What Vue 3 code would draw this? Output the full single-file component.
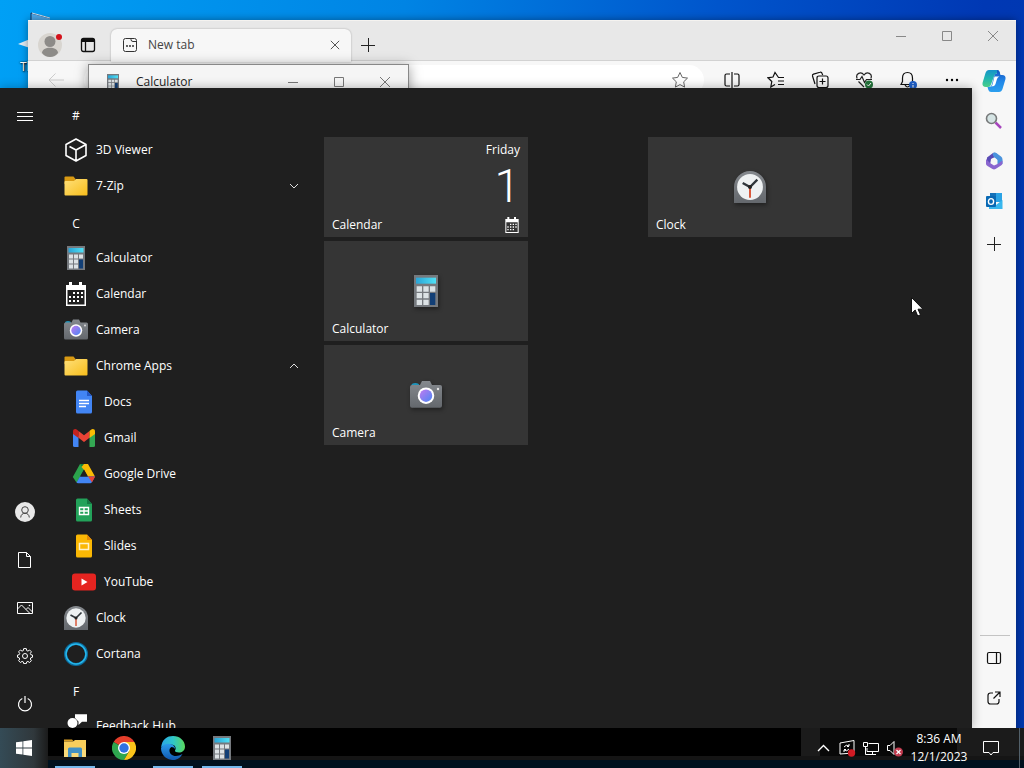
<script setup>
const apps = [
  { heading: '#' },
  { name: '3D Viewer', icon: 'cube' },
  { name: '7-Zip', icon: 'folder', chevron: 'down' },
  { heading: 'C' },
  { name: 'Calculator', icon: 'calculator' },
  { name: 'Calendar', icon: 'calendar' },
  { name: 'Camera', icon: 'camera' },
  { name: 'Chrome Apps', icon: 'folder', chevron: 'up' },
  { name: 'Docs', icon: 'docs', sub: true },
  { name: 'Gmail', icon: 'gmail', sub: true },
  { name: 'Google Drive', icon: 'drive', sub: true },
  { name: 'Sheets', icon: 'sheets', sub: true },
  { name: 'Slides', icon: 'slides', sub: true },
  { name: 'YouTube', icon: 'youtube', sub: true },
  { name: 'Clock', icon: 'clock' },
  { name: 'Cortana', icon: 'cortana' },
  { heading: 'F' },
  { name: 'Feedback Hub', icon: 'feedback' }
]
const tileGroups = [
  [
    { name: 'Calendar', live: { day: 'Friday', date: '1' } },
    { name: 'Calculator', icon: 'calculator' },
    { name: 'Camera', icon: 'camera' }
  ],
  [{ name: 'Clock', icon: 'clock' }]
]
const railItems = [
  { label: 'Account', icon: 'user' },
  { label: 'Documents', icon: 'document' },
  { label: 'Pictures', icon: 'picture' },
  { label: 'Settings', icon: 'gear' },
  { label: 'Power', icon: 'power' }
]
const toolbarItems = [
  { label: 'Split screen', icon: 'split' },
  { label: 'Favorites', icon: 'favorites' },
  { label: 'Collections', icon: 'collections' },
  { label: 'Browser essentials', icon: 'essentials' },
  { label: 'Notifications', icon: 'bell' },
  { label: 'More', icon: 'more' }
]
const sideItems = [
  { label: 'Copilot', icon: 'copilot', big: true },
  { label: 'Search', icon: 'magnifier' },
  { label: 'Microsoft 365', icon: 'm365' },
  { label: 'Outlook', icon: 'outlook' }
]
const pinned = [
  { label: 'File Explorer', icon: 'explorer', running: true },
  { label: 'Chrome', icon: 'chrome', running: false },
  { label: 'Edge', icon: 'edge', running: true },
  { label: 'Calculator', icon: 'calculator', running: true }
]
const tray = [
  { label: 'Show hidden icons', icon: 'trayup' },
  { label: 'Updates', icon: 'update' },
  { label: 'Network', icon: 'network' },
  { label: 'Volume', icon: 'volume' }
]
</script>

<template>
  <div class="desktop">
    <svg class="sprite" aria-hidden="true">
      <defs>
        <linearGradient id="gFolder" x1="0" y1="0" x2="1" y2="1"><stop offset="0" stop-color="#ffe07a" /><stop offset="1" stop-color="#f7bd1b" /></linearGradient>
        <linearGradient id="gLens" x1="0" y1="0" x2="1" y2="1"><stop offset="0" stop-color="#c17af0" /><stop offset="1" stop-color="#4a86f4" /></linearGradient>
        <linearGradient id="gScreen"><stop offset="0" stop-color="#2aa4d6" /><stop offset="1" stop-color="#4fe0f5" /></linearGradient>
        <linearGradient id="gMetal" x1="0" y1="0" x2="0" y2="1"><stop offset="0" stop-color="#85898e" /><stop offset="1" stop-color="#64686d" /></linearGradient>
        <linearGradient id="gCopA" x1="0" y1="0" x2="0" y2="1"><stop offset="0" stop-color="#1693c9" /><stop offset="0.5" stop-color="#21b5b0" /><stop offset="1" stop-color="#4ccf87" /></linearGradient>
        <linearGradient id="gCopB" x1="0" y1="0" x2="0" y2="1"><stop offset="0" stop-color="#1554c0" /><stop offset="0.5" stop-color="#2186e8" /><stop offset="1" stop-color="#2b9fee" /></linearGradient>
        <linearGradient id="gEdgeA" x1="0" y1="0" x2="1" y2="0"><stop offset="0" stop-color="#2aa5e6" /><stop offset="0.5" stop-color="#2fc6c9" /><stop offset="1" stop-color="#5ad95c" /></linearGradient>
        <linearGradient id="gEdgeB" x1="0" y1="0" x2="0" y2="1"><stop offset="0" stop-color="#2b9bea" /><stop offset="1" stop-color="#1158b0" /></linearGradient>
      </defs>

      <symbol id="i-menu" viewBox="0 0 16 16"><path d="M0 4.500h16M0 8.500h16M0 12.500h16" fill="none" stroke="#fff" /></symbol>
      <symbol id="i-user" viewBox="0 0 20 20"><circle cx="10" cy="10" r="10" fill="#e8e8e8" /><circle cx="10" cy="8" r="3.300" fill="none" stroke="#444" /><path d="M5.700 15.500c.2-2.800 1.800-4.200 4.300-4.200s4.100 1.400 4.300 4.200" fill="none" stroke="#444" /></symbol>
      <symbol id="i-document" viewBox="0 0 16 16"><path d="M1.500.5h8l4 4v11h-12zM9.500 .5v4h4" fill="none" stroke="#fff" /></symbol>
      <symbol id="i-picture" viewBox="0 0 16 16"><path d="M.5 2.500h15v11H.5zM.5 9l4-4 8 8M9 9.500l2-2 4.500 4.500" fill="none" stroke="#fff" /><circle cx="12.500" cy="5.500" r=".8" fill="#fff" /></symbol>
      <symbol id="i-gear" viewBox="0 0 16 16"><path d="M6.700.6h2.600l.4 2 1.200.5 1.700-1.100 1.800 1.800-1.100 1.700.5 1.200 1.700.4v2.200l-1.700.5-.5 1.200 1.100 1.700-1.800 1.800-1.700-1.100-1.200.5-.4 1.700H6.700l-.4-1.700-1.200-.5-1.700 1.100-1.800-1.800 1.100-1.700-.5-1.200-1.700-.5V7.100l1.700-.4.5-1.200-1.100-1.700 1.800-1.800 1.700 1.100 1.200-.5z" fill="none" stroke="#fff" /><circle cx="8" cy="8" r="2.500" fill="none" stroke="#fff" /></symbol>
      <symbol id="i-power" viewBox="0 0 16 16"><path d="M5.300 2.500a6.500 6.500 0 1 0 5.400 0M8 0v7" fill="none" stroke="#fff" stroke-width="1.200" /></symbol>

      <symbol id="i-cube" viewBox="0 0 24 24"><path d="M12 1l10 5.500v11L12 23 2 17.500v-11zM5.500 8.500L12 12l10-5.500M12 12v11" fill="none" stroke="#fff" stroke-width="1.600" stroke-linejoin="round" /></symbol>
      <symbol id="i-folder" viewBox="0 0 24 24"><path d="M.5 3.500q0-1 1-1h8l2 2.500v5H.5z" fill="#d99a13" /><path d="M1.500 7h8.500l2-2h10.500q1 0 1 1v14.500q0 1-1 1h-21q-1 0-1-1V8q0-1 1-1z" fill="url(#gFolder)" /></symbol>
      <symbol id="i-calculator" viewBox="0 0 24 24"><path d="M3 0h18v24H3z" fill="#75797e" /><path d="M4.500 2h15v4.500h-15z" fill="url(#gScreen)" /><path d="M5 8.500h4v4H5zM10 8.500h4v4h-4zM15 8.500h4v4h-4zM5 13.500h4v4H5zM10 13.500h4v4h-4zM5 18.500h4v4H5zM10 18.500h4v4h-4z" fill="#dce2e5" /><path d="M15 13.500h4v9h-4z" fill="#123f76" /></symbol>
      <symbol id="i-calendar" viewBox="0 0 24 24"><path d="M2 3h3V0h3v3h7V0h3v3h4v21H2zm1.500 5v14.500h17V8z" fill="#fff" fill-rule="evenodd" /><path d="M9 10h2v2H9zM13 10h2v2h-2zM17 10h2v2h-2zM5 14h2v2H5zM9 14h2v2H9zM13 14h2v2h-2zM17 14h2v2h-2zM5 18h2v2H5zM9 18h2v2H9zM13 18h2v2h-2z" fill="#fff" /></symbol>
      <symbol id="i-camera" viewBox="0 0 24 24"><path d="M1 5q0-2 3-2t3 2z" fill="#1f94ba" /><path d="M0 6q0-1.500 1.500-1.500h6l1.500-3h6l1.500 3h6Q24 4.500 24 6v14q0 1.500-1.500 1.500h-21Q0 21.500 0 20z" fill="url(#gMetal)" /><circle cx="12" cy="12.500" r="6.200" fill="#fff" /><circle cx="12" cy="12.500" r="4.700" fill="url(#gLens)" /><circle cx="21" cy="7.500" r=".9" fill="#e4e4e4" /></symbol>
      <symbol id="i-docs" viewBox="0 0 24 24"><path d="M5.500.5h9.500l5 5.500v16q0 1.500-1.500 1.500h-13Q4 23.500 4 22V2Q4 .5 5.500.5z" fill="#4285f4" /><path d="M15 .5l5 5.500h-5z" fill="#2459c5" /><path d="M7 10.500h10M7 13.500h10M7 16.500h7" stroke="#fff" stroke-width="1.300" /></symbol>
      <symbol id="i-gmail" viewBox="0 0 24 24"><path d="M1 6l5.500 4v11H2.500Q1 21 1 19.500z" fill="#4285f4" /><path d="M23 6l-5.500 4v11h4q1.500 0 1.500-1.500z" fill="#34a853" /><path d="M1 8V5.500C1 3 3.500 2.500 5 3.700l1.500 1.200V12z" fill="#c5221f" /><path d="M6.500 5l5.500 4.200L17.500 5v6.800L12 16l-5.500-4.200z" fill="#ea4335" /><path d="M17.500 5l1.500-1.300c1.500-1.200 4-.7 4 1.800V8l-5.500 4z" fill="#fbbc04" /></symbol>
      <symbol id="i-drive" viewBox="0 0 24 24"><path d="M8 2h8l-4 6-4.500 8-3 4.500L.8 15z" fill="#2ba24c" /><path d="M8 2h8l-4 5.500z" fill="#188038" /><path d="M12 2h4l7 12.500h-7.500L12 8 9.500 5z" fill="#fbbc04" /><path d="M4.500 20.500l3.500-6h15l-3 5.500q-.6 1.200-1.800 1.200H6q-1 0-1.500-.7z" fill="#4285f4" /><path d="M16 14.500h7.200l-3.200 5.700z" fill="#ea4335" /><path d="M12 7.500l4 7H8z" fill="#1f1f1f" /></symbol>
      <symbol id="i-sheets" viewBox="0 0 24 24"><path d="M5.500.5h9.500l5 5.500v16q0 1.500-1.500 1.500h-13Q4 23.500 4 22V2Q4 .5 5.500.5z" fill="#23a25a" /><path d="M15 .5l5 5.500h-5z" fill="#147842" /><path d="M7.500 9.500h9v7h-9zM12 9.500v7M7.500 13h9" fill="none" stroke="#fff" stroke-width="1.400" /></symbol>
      <symbol id="i-slides" viewBox="0 0 24 24"><path d="M5.500.5h9.500l5 5.500v16q0 1.500-1.500 1.500h-13Q4 23.500 4 22V2Q4 .5 5.500.5z" fill="#fbb804" /><path d="M15 .5l5 5.500h-5z" fill="#e58b05" /><path d="M7.500 9.500h9v6h-9z" fill="none" stroke="#fff3cd" stroke-width="1.500" /></symbol>
      <symbol id="i-youtube" viewBox="0 0 24 24"><rect y="3.500" width="24" height="17" rx="3" fill="#e52420" /><path d="M9.500 8.500l6 3.500-6 3.500z" fill="#fff" /></symbol>
      <symbol id="i-clock" viewBox="0 0 24 24"><path d="M0 24V12a12 12 0 0 1 24 0v12z" fill="url(#gMetal)" /><circle cx="12" cy="12" r="9.700" fill="#eef1f2" /><path d="M12 12v8" stroke="#d9583b" stroke-width="1.500" /><path d="M6.500 9L12 12l5.500-5.500" fill="none" stroke="#30363b" stroke-width="1.700" /><circle cx="12" cy="12" r="1.500" fill="#222" /></symbol>
      <symbol id="i-cortana" viewBox="0 0 24 24"><circle cx="12" cy="12" r="10.500" fill="none" stroke="#0b6b9c" stroke-width="3" /><circle cx="12" cy="12" r="10" fill="none" stroke="#27b8ec" stroke-width="1.500" /></symbol>
      <symbol id="i-feedback" viewBox="0 0 24 24"><circle cx="8.500" cy="9" r="5" fill="#fff" /><path d="M11 .3h12v7.500h-5L14.500 11V7.500L11 4zM3 22q0-6 5.500-6t5.500 6z" fill="#fff" /></symbol>
      <symbol id="i-down" viewBox="0 0 10 10"><path d="M1 3l4 4 4-4" fill="none" stroke="#ddd" /></symbol>
      <symbol id="i-up" viewBox="0 0 10 10"><path d="M1 7l4-4 4 4" fill="none" stroke="#ddd" /></symbol>

      <symbol id="i-avatar" viewBox="0 0 24 24"><circle cx="12" cy="12" r="12" fill="#d8d5d0" /><circle cx="12" cy="8.500" r="5.500" fill="#8d8b88" /><path d="M4 20c0-7 16-7 16 0q-3 4-8 4t-8-4z" fill="#8d8b88" /></symbol>
      <symbol id="i-workspace" viewBox="0 0 16 16"><path d="M3.500 1.500h9q2 0 2 2v9q0 2-2 2h-9q-2 0-2-2v-9q0-2 2-2zM5.500 5v9.500" fill="none" stroke="#111" stroke-width="1.300" /><path d="M1.500 5V3.500q0-2 2-2h9q2 0 2 2V5z" fill="#111" /></symbol>
      <symbol id="i-newtab" viewBox="0 0 16 16"><path d="M3.500 1.500h9q2 0 2 2v9q0 2-2 2h-9q-2 0-2-2v-9q0-2 2-2zM9 1.500v1q0 2 2 2h3.500" fill="none" stroke="#333" /><path d="M4 9h2M7 9h2M10 9h2" stroke="#333" stroke-width="1.500" /></symbol>
      <symbol id="i-close" viewBox="0 0 12 12"><path d="M1 1l10 10M11 1L1 11" fill="none" stroke="currentColor" /></symbol>
      <symbol id="i-min" viewBox="0 0 12 12"><path d="M1 6.500h10" stroke="currentColor" /></symbol>
      <symbol id="i-max" viewBox="0 0 12 12"><path d="M1.500 1.500h9v9h-9z" fill="none" stroke="currentColor" /></symbol>
      <symbol id="i-plus" viewBox="0 0 14 14"><path d="M7.500 0v14M0 7.500h14" stroke="#222" /></symbol>
      <symbol id="i-back" viewBox="0 0 16 16"><path d="M16 8H1M7.500 1.500L1 8l6.500 6.500" fill="none" stroke="#ccc" /></symbol>
      <symbol id="i-star" viewBox="0 0 18 18"><path d="M9 1.500l2.300 4.900 5.200.7-3.800 3.700.9 5.300L9 13.600l-4.600 2.500.9-5.300L1.500 7.100l5.200-.7z" fill="none" stroke="#666" /></symbol>
      <symbol id="i-split" viewBox="0 0 18 18"><path d="M7 3H3.500Q2 3 2 4.500v9Q2 15 3.500 15H7M11 3h3.500Q16 3 16 4.500v9q0 1.500-1.500 1.500H11M9 1v16" fill="none" stroke="#111" stroke-width="1.200" /></symbol>
      <symbol id="i-favorites" viewBox="0 0 18 18"><path d="M17 6.500h-5.500L8 1.500 6 6l-5 .8 3.800 3.700-1 5.500L8 13.500M11 10h6M11 13.500h6" fill="none" stroke="#111" stroke-width="1.200" /></symbol>
      <symbol id="i-collections" viewBox="0 0 18 18"><path d="M4 13l-2.500-8q-.4-1.400 1-1.900L9 1.300q1.500-.5 2 1L11.700 4M6 12.500V7q0-2 2-2h7q2 0 2 2v7.500q0 2-2 2H8q-2 0-2-2zM11.500 7.500v6M8.500 10.500h6" fill="none" stroke="#111" stroke-width="1.200" /></symbol>
      <symbol id="i-essentials" viewBox="0 0 18 18"><path d="M2.200 7.500C0 2.500 6 0 9 4c3-4 9-1.500 6.800 3.500M1 8.500h4l2-3 2.500 6 2-3H17M3.500 10.500L9 16" fill="none" stroke="#222" stroke-width="1.200" /><circle cx="14" cy="13.500" r="4" fill="#23743b" /><path d="M12 13.500l1.500 1.500 2.500-3" fill="none" stroke="#fff" /></symbol>
      <symbol id="i-bell" viewBox="0 0 18 18"><path d="M2 13.500l1.500-3V7q0-5.500 5-5.500t5 5.500v3l1.500 3.500zM6 14q2.500 4 5 0" fill="none" stroke="#111" stroke-width="1.200" /><circle cx="14" cy="14" r="4" fill="#1f60c9" /><path d="M14 12v1M14 14v2.500" stroke="#fff" /></symbol>
      <symbol id="i-more" viewBox="0 0 18 18"><circle cx="4" cy="9" r="1.200" /><circle cx="9" cy="9" r="1.200" /><circle cx="14" cy="9" r="1.200" /></symbol>

      <symbol id="i-copilot" viewBox="0 0 24 24"><path d="M7 1h8q2 0 2.600 2l.4 1.500h-3q-2 0-2.700 2L9 15.500Q8.300 18 6 18H4q-4 0-3.500-4L3.500 4Q4.500 1 7 1z" fill="url(#gCopA)" /><path d="M15 1q2 0 2.600 2l.9 3H20q4 0 3.500 4l-3 10q-1 3-3.500 3H9q-2 0-2.600-2L5.500 18H7q2 0 2.700-2l2.600-9.500Q13 4.500 15 4.500z" fill="url(#gCopB)" /><path d="M12.500 7.500h5q-2 .5-2.500 2.500l-1.500 5q-.7 2.500-4.500 2.500 1.200-.5 1.500-2z" fill="#fff" /></symbol>
      <symbol id="i-magnifier" viewBox="0 0 18 18"><path d="M10.500 10.500l5.500 5.500" stroke="#a746bd" stroke-width="2.500" /><circle cx="6.500" cy="6.500" r="5" fill="#d5e4e4" stroke="#77797a" stroke-width="1.600" /></symbol>
      <symbol id="i-m365" viewBox="0 0 18 18"><path d="M2 5.500L8 1q2-1 4 1l1 4-3-1-4 2-1 6q-4-2-3-7.500z" fill="#5a4bb5" /><path d="M8 1q2-1 4 .5l4 3q1.500 1 1.500 3V12l-5 .5V8L9 5q-2-1.500-1-4z" fill="#4a93dd" /><path d="M1 7v5q0 1 1.500 2l5 3q1.500.8 3 0l5.500-3.500q1.500-1 1.500-2.500V8.500L12.500 12 9 13.500 5 11z" fill="#8a66cf" /><circle cx="9" cy="9.300" r="3" fill="#f7f7f7" /></symbol>
      <symbol id="i-outlook" viewBox="0 0 18 18"><path d="M5 1h12v9H5z" fill="#2aa3e5" /><path d="M5 1h6v6H5z" fill="#1471b9" /><path d="M4 8l7 5 6.500-5v9H4z" fill="#38b7ee" /><rect x="1" y="4" width="10" height="11" rx="1" fill="#0969b4" /><ellipse cx="6" cy="9.500" rx="2.600" ry="2.900" fill="none" stroke="#fff" stroke-width="1.400" /></symbol>
      <symbol id="i-panel" viewBox="0 0 16 16"><path d="M3 2.500h10q1.500 0 1.500 1.500v8q0 1.500-1.500 1.500H3q-1.500 0-1.500-1.500V4q0-1.500 1.500-1.500zM10.500 2.500v11" fill="none" stroke="#111" stroke-width="1.200" /></symbol>
      <symbol id="i-open" viewBox="0 0 16 16"><path d="M7 3H4.500Q2 3 2 5.500v6Q2 14 4.500 14h6q2.500 0 2.500-2.500V9M9 2h5v5M14 2L7.500 8.500" fill="none" stroke="#111" stroke-width="1.200" /></symbol>

      <symbol id="i-windows" viewBox="0 0 16 16"><path d="M0 2.300L6.500 1.400v6.200H0zM7.300 1.300L16 0v7.600H7.300zM0 8.400h6.500v6.200L0 13.700zM7.300 8.400H16V16l-8.700-1.300z" fill="#fff" /></symbol>
      <symbol id="i-explorer" viewBox="0 0 24 24"><path d="M1 3.500h8l2 2H1z" fill="#d99e24" /><path d="M1 5.500h9l2-1.500h11v17H1z" fill="#f8ce5c" /><path d="M1 14h22v7H1z" fill="#fbdb7c" /><path d="M5 13q0-1.500 1.500-1.500h11Q19 11.500 19 13v8h-3.500v-4h-7v4H5z" fill="#4291c5" /></symbol>
      <symbol id="i-chrome" viewBox="0 0 24 24"><path d="M12 12L1.600 6A12 12 0 0 1 22.400 6z" fill="#e43e2b" /><path d="M12 12L1.600 6A12 12 0 0 0 12 24l5.200-9z" fill="#2ea64e" /><path d="M12 12V6h10.400A12 12 0 0 1 12 24l5.200-9z" fill="#fbc41a" /><circle cx="12" cy="12" r="6" fill="#fff" /><circle cx="12" cy="12" r="4.700" fill="#2f72e2" /></symbol>
      <symbol id="i-edge" viewBox="0 0 24 24"><path d="M0 12C1 3 6 0 12 0c7 0 12 5 12 10.500 0 4-3 6-6 6-2.500 0-4.500-1-4-2 1.500-2 .5-6-4-6C5.500 8.500 1 10 0 12z" fill="url(#gEdgeA)" /><path d="M0 12q3.500-5 9-4 5 .8 5 5-1-2-3.500-2c-4 2-2 9 4.500 9q3 0 6.500-2C18 24 13 24.500 10 23.700 4 22.700 0 18 0 12z" fill="url(#gEdgeB)" /></symbol>
      <symbol id="i-trayup" viewBox="0 0 18 18"><path d="M4 12l5.500-5.500L15 12" fill="none" stroke="#fff" stroke-width="1.400" /></symbol>
      <symbol id="i-update" viewBox="0 0 18 18"><path d="M2 4l14-2.500V14L2 15z" fill="none" stroke="#fff" /><path d="M6 8q2-3 5-1V5M11 7.500H9M11 10q-2 3-5 1v2M6 10.500h2" fill="none" stroke="#fff" /><circle cx="13.500" cy="14" r="3.700" fill="#d21b24" /></symbol>
      <symbol id="i-network" viewBox="0 0 18 18"><path d="M6.500 4.500h10v8H5V9M10.500 12.500v3M7 15.500h7M1.500 3.500h4v4h-4zM3.500 7.500v8H7" fill="none" stroke="#fff" /></symbol>
      <symbol id="i-volume" viewBox="0 0 18 18"><path d="M1.500 6.500H4l4-4v13l-4-4H1.500z" fill="none" stroke="#fff" /><circle cx="12.500" cy="13" r="4.500" fill="#c23a4e" /><path d="M10.500 11l4 4M14.500 11l-4 4" stroke="#fff" stroke-width="1.200" /></symbol>
      <symbol id="i-action" viewBox="0 0 18 18"><path d="M1.500 2.500h15v11H11L9 16l-2-2.500H1.500z" fill="none" stroke="#fff" /></symbol>
    </svg>

    <div class="shortcut">
      <svg width="36" height="48" viewBox="0 0 36 48" aria-hidden="true">
        <path d="M17 18V1l26 7" fill="#4fa9ea" stroke="#16345e" /><path d="M18 1l25 7" stroke="#cfe6f7" /><path d="M4 32l12-5v9z" fill="#e3edf5" />
      </svg>
      <span>Th</span>
    </div>

    <section class="edge" aria-label="Browser">
      <header class="tabstrip">
        <button class="avatar" aria-label="Profile"><svg width="24" height="24"><use href="#i-avatar" /></svg><i class="dot"></i></button>
        <button class="workspace" aria-label="Workspaces"><svg width="16" height="16"><use href="#i-workspace" /></svg></button>
        <div class="tab">
          <svg width="16" height="16" aria-hidden="true"><use href="#i-newtab" /></svg>
          <span>New tab</span>
          <button aria-label="Close tab"><svg width="10" height="10"><use href="#i-close" /></svg></button>
        </div>
        <button class="add" aria-label="New tab"><svg width="14" height="14"><use href="#i-plus" /></svg></button>
        <div class="controls">
          <button aria-label="Minimize"><svg width="12" height="12"><use href="#i-min" /></svg></button>
          <button aria-label="Maximize"><svg width="12" height="12"><use href="#i-max" /></svg></button>
          <button aria-label="Close"><svg width="12" height="12"><use href="#i-close" /></svg></button>
        </div>
      </header>
      <div class="edge-body">
        <div class="toolbar">
          <button class="back" aria-label="Back"><svg width="16" height="16"><use href="#i-back" /></svg></button>
          <div class="address">
            <input type="text" aria-label="Address" />
            <button aria-label="Add to favorites"><svg width="18" height="18"><use href="#i-star" /></svg></button>
          </div>
          <button v-for="t in toolbarItems" :key="t.label" class="tool" :aria-label="t.label"><svg width="18" height="18"><use :href="'#i-' + t.icon" /></svg></button>
        </div>
        <aside class="sidebar">
          <button v-for="s in sideItems" :key="s.label" :aria-label="s.label"><svg :class="{ big: s.big }" width="18" height="18"><use :href="'#i-' + s.icon" /></svg></button>
          <button class="customize" aria-label="Customize"><svg width="14" height="14"><use href="#i-plus" /></svg></button>
          <hr />
          <button aria-label="Hide sidebar"><svg width="16" height="16"><use href="#i-panel" /></svg></button>
          <button aria-label="Open link"><svg width="16" height="16"><use href="#i-open" /></svg></button>
          <button aria-label="Sidebar settings"><svg width="16" height="16"><use href="#i-gear" /></svg></button>
        </aside>
      </div>
    </section>

    <section class="calc" aria-label="Calculator">
      <header>
        <svg width="16" height="16" aria-hidden="true"><use href="#i-calculator" /></svg>
        <span>Calculator</span>
        <button aria-label="Minimize"><svg width="12" height="12"><use href="#i-min" /></svg></button>
        <button aria-label="Maximize"><svg width="12" height="12"><use href="#i-max" /></svg></button>
        <button aria-label="Close"><svg width="12" height="12"><use href="#i-close" /></svg></button>
      </header>
    </section>

    <main class="start">
      <nav class="rail" aria-label="Places">
        <button class="expand" aria-label="Expand"><svg width="16" height="16"><use href="#i-menu" /></svg></button>
        <button v-for="r in railItems" :key="r.label" :aria-label="r.label"><svg :class="r.icon" width="16" height="16"><use :href="'#i-' + r.icon" /></svg></button>
      </nav>
      <ul class="apps">
        <li v-for="(a, i) in apps" :key="i">
          <button v-if="a.heading" class="heading">{{ a.heading }}</button>
          <button v-else class="app" :class="{ sub: a.sub }">
            <svg width="24" height="24" aria-hidden="true"><use :href="'#i-' + a.icon" /></svg>
            <span>{{ a.name }}</span>
            <svg v-if="a.chevron" width="10" height="10" aria-hidden="true"><use :href="'#i-' + a.chevron" /></svg>
          </button>
        </li>
      </ul>
      <div class="groups">
        <div v-for="(g, gi) in tileGroups" :key="gi" class="group">
          <button v-for="t in g" :key="t.name" class="tile">
            <span v-if="t.live" class="live"><span>{{ t.live.day }}</span><span class="date">{{ t.live.date }}</span></span>
            <svg v-else class="art" width="32" height="32" aria-hidden="true"><use :href="'#i-' + t.icon" /></svg>
            <span class="caption">{{ t.name }}<svg v-if="t.live" width="16" height="16" aria-hidden="true"><use href="#i-calendar" /></svg></span>
          </button>
        </div>
      </div>
    </main>

    <footer class="taskbar">
      <button class="win" aria-label="Start"><svg width="16" height="16"><use href="#i-windows" /></svg></button>
      <button v-for="p in pinned" :key="p.label" class="pin" :class="{ running: p.running }" :aria-label="p.label"><svg width="24" height="24"><use :href="'#i-' + p.icon" /></svg></button>
      <div class="tray">
        <button v-for="t in tray" :key="t.label" :aria-label="t.label"><svg width="18" height="18"><use :href="'#i-' + t.icon" /></svg></button>
      </div>
      <button class="time"><span>8:36 AM</span><span>12/1/2023</span></button>
      <button class="action" aria-label="Notifications"><svg width="18" height="18"><use href="#i-action" /></svg></button>
      <button class="peek" aria-label="Show desktop"></button>
    </footer>

    <svg class="cursor" width="13" height="20" viewBox="0 0 13 20" aria-hidden="true"><path d="M.5.5v16l3.700-3.500 2.500 6 2.800-1.200-2.500-5.600h5z" fill="#fff" stroke="#111" /></svg>
  </div>
</template>

<style>
body { margin: 0; overflow: hidden; }
</style>

<style scoped>
* { box-sizing: border-box; }
.desktop {
  position: relative;
  height: 100vh;
  overflow: hidden;
  font: 12px/18px "Open Sans", "Noto Sans", sans-serif;
  background: linear-gradient(100deg, #00a0f5 0%, #0084e4 35%, #0055cc 62%, #0038b4 85%, #0037ac 100%);
}
.sprite { position: absolute; width: 0; height: 0; }
svg { display: block; flex: none; }
button {
  display: flex;
  align-items: center;
  justify-content: center;
  margin: 0;
  padding: 0;
  border: 0;
  background: none;
  color: inherit;
  font: inherit;
}

.shortcut { position: absolute; left: 14px; top: 12px; color: #fff; text-shadow: 1px 1px 2px #000, 0 0 2px #000; }
.shortcut span { display: block; padding-left: 6px; line-height: 14px; }

.edge {
  position: absolute;
  left: 28px;
  right: 8px;
  top: 20px;
  bottom: 10px;
  display: flex;
  flex-direction: column;
  background: #f7f7f7;
  box-shadow: 0 0 8px rgba(0, 0, 0, 0.4);
}
.tabstrip { display: flex; align-items: center; height: 41px; padding: 8px 0 0 10px; background: #e8e8e8; border-top: 1px solid #f5f3f0; border-bottom: 1px solid #d2d2d2; }
.avatar { position: relative; width: 24px; }
.dot { position: absolute; top: 1px; right: 0; width: 6px; height: 6px; border-radius: 50%; background: #d4121b; }
.workspace { width: 48px; margin-left: 2px; }
.tab { display: flex; align-items: center; width: 240px; height: 33px; margin: 0 0 -1px -1px; padding: 0 11px; background: #f7f7f7; border-radius: 6px 6px 0 0; box-shadow: 0 0 2px rgba(0, 0, 0, 0.3); color: #444; }
.tab span { flex: 1; margin-left: 10px; }
.tab button { color: #333; width: 10px; }
.add { width: 34px; }
.controls { display: flex; margin: 0 0 18px auto; color: #888; }
.controls button { width: 46px; height: 14px; }
.edge-body { display: flex; flex: 1; min-height: 0; }
.toolbar { display: flex; align-items: center; flex: 1; height: 38px; min-width: 0; }
.back { width: 56px; }
.address { display: flex; flex: 1; min-width: 0; height: 30px; margin-right: 6px; padding-right: 8px; border-radius: 15px; background: #fff; }
.address input { flex: 1; min-width: 0; border: 0; background: none; }
.address button { width: 32px; }
.tool { width: 44px; height: 38px; }
.sidebar { display: flex; flex-direction: column; width: 42px; padding-right: 2px; }
.sidebar button { height: 40px; flex: none; }
.sidebar .big { width: 24px; height: 24px; }
.sidebar .customize { margin-top: 3px; }
.sidebar hr { width: 30px; margin: auto 6px 2px; border: 0; border-top: 1px solid #c4c4c4; }

.calc { position: absolute; left: 88px; top: 64px; width: 321px; height: 480px; border: 1px solid #888; background: #f0f0f0; box-shadow: 0 2px 12px rgba(0, 0, 0, 0.4); }
.calc header { display: flex; align-items: center; height: 34px; padding-left: 16px; background: #f5f5f5; color: #222; }
.calc span { flex: 1; margin-left: 15px; }
.calc button { width: 46px; height: 32px; color: #777; }

.start { position: absolute; left: 0; right: 52px; top: 88px; bottom: 40px; display: flex; background: #1f1f1f; color: #fff; box-shadow: 0 0 10px rgba(0, 0, 0, 0.3); }
.rail { display: flex; flex-direction: column; width: 50px; padding-top: 4px; }
.rail button { height: 48px; }
.rail .expand { margin-bottom: auto; }
.rail .user { width: 20px; height: 20px; }
.apps { width: 258px; height: 100%; margin: 0; padding: 8px 0 0; overflow: hidden; list-style: none; }
.heading { width: 52px; height: 36px; padding-top: 4px; }
.app { justify-content: flex-start; width: 100%; height: 36px; padding: 0 9px 0 14px; text-align: left; }
.app span { flex: 1; margin-left: 8px; }
.sub { padding-left: 22px; }
.groups { display: flex; gap: 16px; padding: 49px 0 0 16px; }
.group { display: flex; flex-direction: column; gap: 4px; width: 308px; }
.tile { position: relative; width: 204px; height: 100px; background: #353535; }
.art { filter: drop-shadow(1px 2px 2px rgba(0, 0, 0, 0.4)); }
.caption { position: absolute; left: 8px; right: 8px; bottom: 4px; display: flex; align-items: center; justify-content: space-between; text-align: left; line-height: 16px; }
.live { position: absolute; right: 8px; top: 4px; display: flex; flex-direction: column; align-items: flex-end; gap: 4px; line-height: 18px; }
.date { font-family: Roboto, "Open Sans", sans-serif; font-size: 46px; line-height: 46px; font-weight: 300; }

.taskbar {
  position: absolute;
  left: 0;
  right: 0;
  bottom: 0;
  display: flex;
  height: 40px;
  color: #fff;
  background:
    linear-gradient(#00111e, #00111e) 0 100% / 100% 8px no-repeat,
    linear-gradient(90deg, transparent 48px, #151515 48px) 0 28px / 100% 4px no-repeat,
    linear-gradient(270deg, #1b1b1b 67px, #080808 67px 204px, #1b1b1b 204px 223px, #000 223px);
}
.win { width: 48px; background: linear-gradient(90deg, #344b56, #30383c 70%, #1b1b1b); }
.pin { position: relative; width: 48px; margin-left: 1px; }
.win + .pin { margin-left: 3px; }
.running::after { content: ""; position: absolute; left: 4px; right: 4px; bottom: 0; height: 2px; background: #76b9ed; }
.tray { display: flex; margin-left: auto; }
.tray button { width: 24px; }
.time { flex-direction: column; width: 64px; }
.action { width: 40px; }
.peek { width: 5px; margin-left: 8px; border-left: 1px solid #52606a; }
.cursor { position: absolute; left: 911px; top: 297px; }
</style>
